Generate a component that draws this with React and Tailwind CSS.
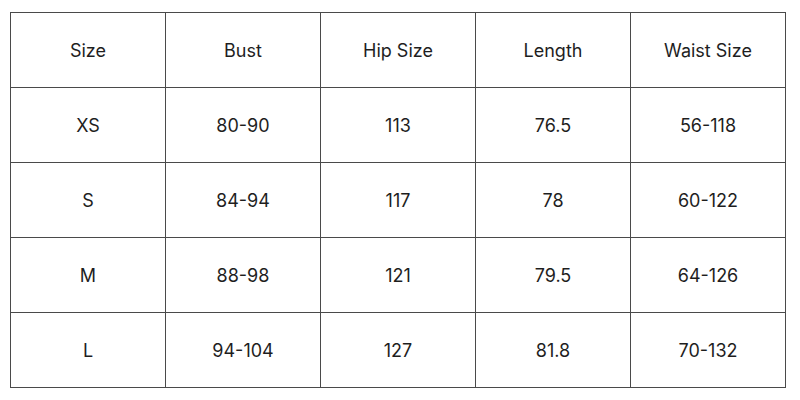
export default function App() {
  const rows = [
    ["Size", "Bust", "Hip Size", "Length", "Waist Size"],
    ["XS", "80-90", "113", "76.5", "56-118"],
    ["S", "84-94", "117", "78", "60-122"],
    ["M", "88-98", "121", "79.5", "64-126"],
    ["L", "94-104", "127", "81.8", "70-132"],
  ];
  return (
    <div className="w-[800px] h-[400px] bg-white pt-[12px] pl-[10px]" style={{ fontFamily: "Inter, 'Open Sans', sans-serif" }}>
      <div className="grid grid-cols-[repeat(5,155px)] w-fit border-l border-t border-[#4a4a4a]">
        {rows.flat().map((c, i) => (
          <div key={i} className="h-[75px] border-r border-b border-[#4a4a4a] flex items-center justify-center text-[18px] text-[#1e1e1e]">
            {c}
          </div>
        ))}
      </div>
    </div>
  );
}
